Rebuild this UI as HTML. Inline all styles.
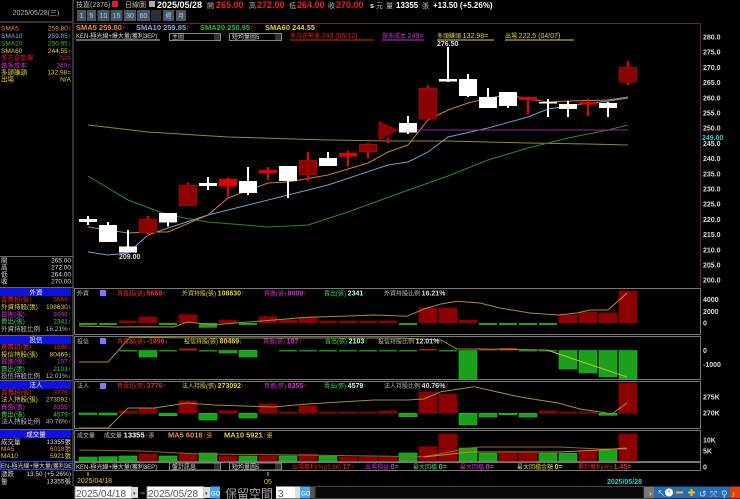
<!DOCTYPE html>
<html><head><meta charset="utf-8">
<style>
html,body{margin:0;padding:0;background:#000;}
body{width:740px;height:499px;overflow:hidden;position:relative;font-family:"Liberation Sans","Noto Sans CJK TC",sans-serif;}
svg{position:absolute;left:0;top:0;}
text{font-family:"Liberation Sans","Noto Sans CJK TC",sans-serif;}
</style></head><body>
<svg width="740" height="499" viewBox="0 0 740 499" xmlns="http://www.w3.org/2000/svg">
<rect width="740" height="499" fill="#000"/>

<!-- ===== LEFT PANEL ===== -->
<line x1="73" y1="0" x2="73" y2="486" stroke="#666" stroke-width="1"/>
<text x="36" y="15" font-size="7" fill="#bbb" text-anchor="middle">2025/05/28(三)</text>
<line x1="0" y1="22" x2="73" y2="22" stroke="#666"/>
<g font-size="6.5">
<text x="1" y="30.5" fill="#e8903a">SMA5</text><text x="71" y="30.5" fill="#e8903a" text-anchor="end">259.80↑</text>
<text x="1" y="38" fill="#7fb0e0">SMA10</text><text x="71" y="38" fill="#7fb0e0" text-anchor="end">259.85↑</text>
<text x="1" y="45.5" fill="#2fbf2f">SMA20</text><text x="71" y="45.5" fill="#2fbf2f" text-anchor="end">250.95↑</text>
<text x="1" y="53" fill="#e0d040">SMA60</text><text x="71" y="53" fill="#e0d040" text-anchor="end">244.55↑</text>
<text x="1" y="60" fill="#e02020">多方逆勢單</text><text x="71" y="60" fill="#e02020" text-anchor="end">N/A</text>
<text x="1" y="67.5" fill="#d030d0">做多成本</text><text x="71" y="67.5" fill="#d030d0" text-anchor="end">249=</text>
<text x="1" y="74.5" fill="#e0d040">多頭賺頭</text><text x="71" y="74.5" fill="#e0d040" text-anchor="end">132.98=</text>
<text x="1" y="81.5" fill="#e0d040">出場</text><text x="71" y="81.5" fill="#e0d040" text-anchor="end">N/A</text>
</g>
<line x1="0" y1="256.5" x2="73" y2="256.5" stroke="#666"/>
<g font-size="6.5" fill="#ddd">
<text x="1" y="262.5">開</text><text x="71" y="262.5" text-anchor="end">265.00</text>
<text x="1" y="269.5">高</text><text x="71" y="269.5" text-anchor="end">272.00</text>
<text x="1" y="276.5">低</text><text x="71" y="276.5" text-anchor="end">264.00</text>
<text x="1" y="283.5">收</text><text x="71" y="283.5" text-anchor="end">270.00</text>
</g>
<!-- 外資 -->
<line x1="0" y1="287.5" x2="73" y2="287.5" stroke="#666"/>
<rect x="0" y="288" width="71" height="8" fill="#1010e0"/>
<text x="36" y="294.5" font-size="6.5" fill="#fff" text-anchor="middle">外資</text>
<g font-size="6.5">
<text x="1" y="301.5" fill="#e03030">買賣超(張)</text><text x="71" y="301.5" fill="#e03030" text-anchor="end">5669↑</text>
<text x="1" y="309" fill="#e0d040">外資持股(張)</text><text x="71" y="309" fill="#e0d040" text-anchor="end">108630↑</text>
<text x="1" y="316.5" fill="#d030d0">買進(張)</text><text x="71" y="316.5" fill="#d030d0" text-anchor="end">8009↑</text>
<text x="1" y="323.5" fill="#40d060">賣出(張)</text><text x="71" y="323.5" fill="#40d060" text-anchor="end">2341↑</text>
<text x="1" y="331" fill="#bbb">外資持股比例</text><text x="71" y="331" fill="#bbb" text-anchor="end">16.21%↑</text>
</g>
<!-- 投信 -->
<line x1="0" y1="335.5" x2="73" y2="335.5" stroke="#666"/>
<rect x="0" y="336" width="71" height="8" fill="#1010e0"/>
<text x="36" y="342" font-size="6.5" fill="#fff" text-anchor="middle">投信</text>
<g font-size="6.5">
<text x="1" y="349" fill="#e03030">買賣超(張)</text><text x="71" y="349" fill="#e03030" text-anchor="end">-1996↓</text>
<text x="1" y="356.5" fill="#e0d040">投信持股(張)</text><text x="71" y="356.5" fill="#e0d040" text-anchor="end">80469↓</text>
<text x="1" y="363.5" fill="#d030d0">買進(張)</text><text x="71" y="363.5" fill="#d030d0" text-anchor="end">107↑</text>
<text x="1" y="371" fill="#40d060">賣出(張)</text><text x="71" y="371" fill="#40d060" text-anchor="end">2103↑</text>
<text x="1" y="378" fill="#bbb">投信持股比例</text><text x="71" y="378" fill="#bbb" text-anchor="end">12.01%↓</text>
</g>
<!-- 法人 -->
<line x1="0" y1="380.5" x2="73" y2="380.5" stroke="#666"/>
<rect x="0" y="381" width="71" height="8" fill="#1010e0"/>
<text x="36" y="387" font-size="6.5" fill="#fff" text-anchor="middle">法人</text>
<g font-size="6.5">
<text x="1" y="394.5" fill="#e03030">買賣超(張)</text><text x="71" y="394.5" fill="#e03030" text-anchor="end">3776↑</text>
<text x="1" y="401.5" fill="#e0d040">法人持股(張)</text><text x="71" y="401.5" fill="#e0d040" text-anchor="end">273092↑</text>
<text x="1" y="409" fill="#d030d0">買進(張)</text><text x="71" y="409" fill="#d030d0" text-anchor="end">8355↑</text>
<text x="1" y="416.5" fill="#40d060">賣出(張)</text><text x="71" y="416.5" fill="#40d060" text-anchor="end">4579↑</text>
<text x="1" y="423.5" fill="#bbb">法人持股比例</text><text x="71" y="423.5" fill="#bbb" text-anchor="end">40.76%↑</text>
</g>
<!-- 成交量 -->
<line x1="0" y1="429.5" x2="73" y2="429.5" stroke="#666"/>
<rect x="0" y="430" width="71" height="8" fill="#1010e0"/>
<text x="36" y="436.5" font-size="6.5" fill="#fff" text-anchor="middle">成交量</text>
<g font-size="6.5">
<text x="1" y="444" fill="#ddd">成交量</text><text x="71" y="444" fill="#ddd" text-anchor="end">13355張</text>
<text x="1" y="451" fill="#e8903a">MA5</text><text x="71" y="451" fill="#e8903a" text-anchor="end">6018張</text>
<text x="1" y="458" fill="#e0d040">MA10</text><text x="71" y="458" fill="#e0d040" text-anchor="end">5921張</text>
</g>
<rect x="0.5" y="461.5" width="72" height="8" fill="#000" stroke="#2040ff"/>
<text x="1" y="468" font-size="6" fill="#ddd">EN-極光線+爆大量(獲利3E</text>
<g font-size="6.5" fill="#ddd">
<text x="1" y="476">漲跌</text><text x="71" y="476" text-anchor="end">13.50 (+5.26%)</text>
<text x="1" y="483.5">量</text><text x="71" y="483.5" text-anchor="end">13355張</text>
</g>

<!-- ===== TOP BAR ===== -->
<g font-size="7">
<text x="76" y="7" fill="#bbb">技嘉(2376)</text>
<rect x="112" y="1" width="6" height="6" fill="#e02020"/>
<text x="125" y="7" fill="#bbb">日線圖</text>
<rect x="149" y="1" width="6" height="6" fill="#aaa"/>
</g>
<g font-weight="bold" font-size="9">
<text x="157" y="8" fill="#fff">2025/05/28</text>
<text x="207" y="8" fill="#bbb" font-size="7" font-weight="normal">開</text>
<text x="216" y="8" fill="#f02020">265.00</text>
<text x="249" y="8" fill="#bbb" font-size="7" font-weight="normal">高</text>
<text x="257" y="8" fill="#f02020">272.00</text>
<text x="289" y="8" fill="#bbb" font-size="7" font-weight="normal">低</text>
<text x="297" y="8" fill="#f02020">264.00</text>
<text x="328" y="8" fill="#bbb" font-size="7" font-weight="normal">收</text>
<text x="336" y="8" fill="#f02020">270.00</text>
<text x="370" y="8" fill="#fff" font-size="7">s</text>
<text x="376" y="8" fill="#bbb" font-size="7" font-weight="normal">元</text>
<text x="386" y="8" fill="#bbb" font-size="7" font-weight="normal">量</text>
<text x="396" y="8" fill="#fff" font-size="8">13355</text>
<text x="422" y="8" fill="#bbb" font-size="7" font-weight="normal">張</text>
<text x="433" y="8" fill="#fff" font-size="8">+13.50 (+5.26%)</text>
</g>
<!-- period buttons -->
<g font-size="7" fill="#9cd0ff" text-anchor="middle">
<rect x="77" y="10" width="9" height="11" fill="#4a5560"/><text x="81.5" y="18">1</text>
<rect x="87" y="10" width="9" height="11" fill="#4a5560"/><text x="91.5" y="18">5</text>
<rect x="97.5" y="10" width="12" height="11" fill="#4a5560"/><text x="103.5" y="18">10</text>
<rect x="110.5" y="10" width="12" height="11" fill="#4a5560"/><text x="116.5" y="18">15</text>
<rect x="124" y="10" width="12" height="11" fill="#4a5560"/><text x="130" y="18">30</text>
<rect x="137" y="10" width="13" height="11" fill="#4a5560"/><text x="143.5" y="18">60</text>
<rect x="151" y="10" width="10" height="11" fill="#2a3038"/>
<rect x="163" y="10" width="11" height="11" fill="#4a5560"/><text x="168.5" y="18" font-size="6">週</text>
<rect x="176" y="10" width="10" height="11" fill="#4a5560"/><text x="181" y="18" font-size="6">月</text>
</g>

<!-- ===== MAIN CHART ===== -->
<line x1="74" y1="23.5" x2="700" y2="23.5" stroke="#6a2040"/>
<line x1="700.5" y1="23" x2="700.5" y2="287" stroke="#6a2040"/>
<g font-size="7.5" font-weight="bold">
<text x="76" y="30" fill="#e8903a">SMA5 259.80<tspan fill="#f02020">↑</tspan></text>
<text x="136" y="30" fill="#7fb0e0">SMA10 259.85<tspan fill="#f02020">↑</tspan></text>
<text x="200" y="30" fill="#2fbf2f">SMA20 250.95<tspan fill="#f02020">↑</tspan></text>
<text x="265" y="30" fill="#e0d040">SMA60 244.55<tspan fill="#f02020">↑</tspan></text>
</g>
<g font-size="6">
<text x="76" y="38" fill="#ddd">KEN-極光線+爆大量(獲利3EP)</text>
<line x1="76" y1="40" x2="160" y2="40" stroke="#ccc"/>
<rect x="169.5" y="33.5" width="51" height="7" fill="#000" stroke="#888"/><text x="172" y="39" fill="#ddd">主圖</text><rect x="214" y="34" width="6" height="6" fill="#333"/>
<rect x="229.5" y="33.5" width="52" height="7" fill="#000" stroke="#888"/><text x="232" y="39" fill="#ddd">短均量圖5</text><rect x="275" y="34" width="6" height="6" fill="#333"/>
<text x="290" y="38" fill="#e02020">多方逆勢單 <tspan font-size="7">249   (05/12)</tspan></text>
<line x1="290" y1="40" x2="374" y2="40" stroke="#e02020"/>
<text x="382" y="38" fill="#d030d0">做多成本 <tspan font-size="7">249=</tspan></text>
<line x1="382" y1="40" x2="424" y2="40" stroke="#d030d0"/>
<text x="437" y="38" fill="#e0d040">多頭賺頭 <tspan font-size="7">132.98=</tspan></text>
<line x1="437" y1="40" x2="494" y2="40" stroke="#e0d040"/>
<text x="505" y="38" fill="#e0d040">出場 <tspan font-size="7">222.5   (04/07)</tspan></text>
<line x1="505" y1="40" x2="574" y2="40" stroke="#e0d040"/>
</g>

<!-- price axis -->
<g font-size="7" fill="#ddd" font-weight="bold">
<text x="703" y="39.5">280.0</text><text x="703" y="54.7">275.0</text><text x="703" y="69.9">270.0</text>
<text x="703" y="85.1">265.0</text><text x="703" y="100.3">260.0</text><text x="703" y="115.5">255.0</text>
<text x="703" y="130.7">250.0</text><text x="703" y="145.9">245.0</text><text x="703" y="161.1">240.0</text>
<text x="703" y="176.3">235.0</text><text x="703" y="191.5">230.0</text><text x="703" y="206.7">225.0</text>
<text x="703" y="221.9">220.0</text><text x="703" y="237.1">215.0</text><text x="703" y="252.3">210.0</text>
<text x="703" y="267.5">205.0</text><text x="703" y="282.7">200.0</text>
<rect x="702" y="133.5" width="30" height="7" fill="#000"/>
<text x="702" y="140" fill="#30d0d0">249.00</text>
</g>

<!-- MA lines -->
<g fill="none" stroke-width="1">
<polyline stroke="#8b8b2a" points="88,125 148,132 228,137 328,140 388,141 448,141 528,143 588,144 628,145"/>
<polyline stroke="#2a8a2a" points="88,176 128,200 168,215 208,222 268,227 308,225 348,212 400,193 448,176 488,160 528,148 568,138 608,130 628,125"/>
<polyline stroke="#6fa0c8" points="88,252 108,255 128,253 148,235 168,228 208,215 248,205 288,195 328,185 388,165 408,162 428,152 448,137 488,128 528,117 548,109 568,106 608,101 628,98"/>
<polyline stroke="#c8803a" points="88,227 128,233 148,232 168,232 208,215 228,198 268,183 288,182 328,175 368,163 388,152 408,145 428,120 448,110 468,103 488,98 508,95 528,99 548,102 568,101 608,100 628,97"/>
<line x1="395" y1="130" x2="628" y2="130" stroke="#a020a0"/>
</g>

<!-- candles -->
<g stroke-width="2">
<!-- whites -->
<g stroke="#fff" fill="#fff">
<line x1="88" y1="216" x2="88" y2="225"/><rect x="79" y="219" width="18" height="3" stroke="none"/>
<line x1="108" y1="222" x2="108" y2="242"/><rect x="99" y="225" width="18" height="17" stroke="none"/>
<line x1="128" y1="230" x2="128" y2="252"/><rect x="119" y="246.5" width="18" height="6" stroke="none"/>
<line x1="168" y1="213" x2="168" y2="226.5"/><rect x="159" y="213" width="18" height="9.5" stroke="none"/>
<line x1="208" y1="177" x2="208" y2="190"/><rect x="199" y="183" width="18" height="3" stroke="none"/>
<line x1="248" y1="167" x2="248" y2="195"/><rect x="239" y="181" width="18" height="12" stroke="none"/>
<line x1="288" y1="166" x2="288" y2="198"/><rect x="279" y="166" width="18" height="15" stroke="none"/>
<line x1="328" y1="152" x2="328" y2="166"/><rect x="319" y="158" width="18" height="8" stroke="none"/>
<line x1="408" y1="116" x2="408" y2="134"/><rect x="399" y="123" width="18" height="9.5" stroke="none"/>
<line x1="448" y1="47" x2="448" y2="82"/><rect x="439" y="79" width="18" height="2.5" stroke="none"/>
<line x1="468" y1="74" x2="468" y2="97"/><rect x="459" y="79" width="18" height="17" stroke="none"/>
<line x1="488" y1="88" x2="488" y2="108"/><rect x="479" y="97" width="18" height="11" stroke="none"/>
<line x1="508" y1="92" x2="508" y2="108"/><rect x="499" y="92" width="18" height="14" stroke="none"/>
<line x1="548" y1="99" x2="548" y2="117"/><rect x="539" y="102" width="18" height="1.5" stroke="none"/>
<line x1="568" y1="101" x2="568" y2="117"/><rect x="559" y="104" width="18" height="5" stroke="none"/>
<line x1="608" y1="102" x2="608" y2="117"/><rect x="599" y="103" width="18" height="5" stroke="none"/>
</g>
<!-- reds -->
<g stroke="#f00000">
<line x1="148" y1="216" x2="148" y2="236"/>
<line x1="188" y1="182.5" x2="188" y2="206"/>
<line x1="228" y1="177.5" x2="228" y2="196.5"/>
<line x1="268" y1="167" x2="268" y2="180"/>
<line x1="308" y1="152" x2="308" y2="181"/>
<line x1="348" y1="150.5" x2="348" y2="166.5"/>
<line x1="368" y1="143" x2="368" y2="158"/>
<line x1="388" y1="138" x2="388" y2="143"/>
<line x1="428" y1="85" x2="428" y2="119"/>
<line x1="528" y1="97" x2="528" y2="114"/>
<line x1="588" y1="99" x2="588" y2="116"/>
<line x1="628" y1="61" x2="628" y2="85"/>
</g>
<g fill="#8b0000" stroke="#b00000" stroke-width="1">
<rect x="139.5" y="219.5" width="17" height="13"/>
<rect x="179.5" y="185.5" width="17" height="20"/>
<rect x="299.5" y="160.5" width="17" height="14"/>
<rect x="359.5" y="144.5" width="17" height="7"/>
<rect x="419.5" y="88.5" width="17" height="30.5"/>
<rect x="619.5" y="67.5" width="17" height="14.5"/>
<polygon points="379,121.7 379,140 397,130"/>
</g>
<g fill="#e00000" stroke="none">
<rect x="219" y="179" width="18" height="7.5"/>
<rect x="259" y="170" width="18" height="3.3"/>
<rect x="339" y="153" width="18" height="3.7"/>
<rect x="519" y="97" width="18" height="3"/>
<rect x="579" y="102" width="18" height="2.5"/>
</g>
</g>
<text x="119" y="259" font-size="7" fill="#ddd" font-weight="bold">209.00</text>
<text x="437" y="46" font-size="7" fill="#ddd" font-weight="bold">276.50</text>

<!-- ===== SUB PANELS ===== -->
<g fill="none" stroke="#777">
<rect x="74.5" y="288.5" width="626" height="46"/>
<rect x="74.5" y="336.5" width="626" height="43"/>
<rect x="74.5" y="381.5" width="626" height="47"/>
<rect x="74.5" y="430.5" width="626" height="31"/>
<rect x="74.5" y="462.5" width="626" height="8"/>
</g>
<!-- panel 1 bars -->
<g>
<g fill="#1fa01f">
<rect x="79" y="323" width="18" height="2"/><rect x="99" y="323" width="18" height="2"/>
<rect x="159" y="323" width="18" height="2"/><rect x="199" y="323" width="18" height="4.7"/>
<rect x="239" y="323" width="18" height="2"/><rect x="399" y="323" width="18" height="2"/>
<rect x="479" y="323" width="18" height="2"/><rect x="499" y="323" width="18" height="2"/>
<rect x="519" y="323" width="18" height="2"/><rect x="539" y="323" width="18" height="2"/>
</g>
<g fill="#8b0000" stroke="#a00000" stroke-width="0.6">
<rect x="119" y="321" width="18" height="2"/><rect x="139" y="317" width="18" height="6"/>
<rect x="179" y="314.7" width="18" height="8.3"/><rect x="219" y="320" width="18" height="3"/>
<rect x="259" y="316.7" width="18" height="6.3"/><rect x="279" y="320" width="18" height="3"/>
<rect x="299" y="317.3" width="18" height="5.7"/><rect x="319" y="321" width="18" height="2"/>
<rect x="339" y="321" width="18" height="2"/><rect x="359" y="321" width="18" height="2"/>
<rect x="379" y="321" width="18" height="2"/><rect x="419" y="308" width="18" height="15"/>
<rect x="439" y="308" width="18" height="15"/><rect x="459" y="320" width="18" height="3"/>
<rect x="559" y="315" width="18" height="8"/><rect x="579" y="312" width="18" height="11"/>
<rect x="599" y="313" width="18" height="10"/><rect x="619" y="291" width="18" height="32"/>
</g>
<polyline fill="none" stroke="#a09030" points="79,326 117,327 154,326.7 174,327 187,322 214,324.7 274,320 307,317.3 341,316.3 374,315 407,316.3 424,309 441,304 457,301.3 480,303 500,308 530,313 558,315 577,313 590,310 608,310"/>
<polyline fill="none" stroke="#e08030" points="608,310 627,293"/>
</g>
<!-- panel 2 bars -->
<g>
<g fill="#1a8a1a">
<rect x="119" y="350" width="18" height="1.5"/><rect x="159" y="350" width="18" height="1.5"/>
<rect x="199" y="350" width="18" height="1.5"/><rect x="239" y="350" width="18" height="1.5"/>
<rect x="279" y="350" width="18" height="1.5"/><rect x="299" y="350" width="18" height="1.5"/>
<rect x="319" y="350" width="18" height="1.5"/><rect x="339" y="350" width="18" height="1.5"/>
<rect x="359" y="350" width="18" height="1.5"/><rect x="379" y="350" width="18" height="1.5"/>
<rect x="399" y="350" width="18" height="1.5"/><rect x="439" y="350" width="18" height="1.5"/>
<rect x="519" y="350" width="18" height="1.5"/><rect x="539" y="350" width="18" height="1.5"/>
</g>
<g fill="#1aa01a" stroke="#1fc01f" stroke-width="0.6">
<rect x="139" y="350.5" width="18" height="6.5"/><rect x="219" y="350.5" width="18" height="2.5"/>
<rect x="239" y="350.5" width="18" height="6.5"/><rect x="459" y="350.5" width="18" height="29"/>
<rect x="559" y="350.5" width="18" height="18.5"/><rect x="579" y="350.5" width="18" height="22.5"/>
<rect x="599" y="350.5" width="18" height="26.5"/><rect x="619" y="350.5" width="18" height="28.5"/>
</g>
<g fill="#b02000">
<rect x="179" y="348.5" width="18" height="2"/><rect x="419" y="349" width="18" height="1.5"/>
<rect x="479" y="349" width="18" height="1.5"/><rect x="499" y="348" width="18" height="2.5"/>
</g>
<polyline fill="none" stroke="#a09030" points="79,362 108,362 130,337.3 200,338 300,338 400,338 441,340 457,349 480,349 547,350"/>
<polyline fill="none" stroke="#c0c030" points="547,350 627,377"/>
</g>
<!-- panel 3 bars -->
<g>
<g fill="#1aa01a" stroke="#1fc01f" stroke-width="0.6">
<rect x="79" y="413" width="18" height="1.5"/><rect x="99" y="413" width="18" height="2"/>
<rect x="159" y="413.3" width="18" height="2.4"/><rect x="199" y="413.3" width="18" height="6.7"/>
<rect x="239" y="413.3" width="18" height="4.7"/><rect x="399" y="413.3" width="18" height="3.4"/>
<rect x="459" y="413.3" width="18" height="11.7"/><rect x="479" y="413.3" width="18" height="3.7"/>
<rect x="499" y="413.3" width="18" height="1.5"/><rect x="519" y="413.3" width="18" height="3.7"/>
<rect x="599" y="413.3" width="18" height="2"/>
</g>
<g fill="#8b0000" stroke="#a00000" stroke-width="0.6">
<rect x="119" y="411" width="18" height="2.3"/><rect x="139" y="408" width="18" height="5.3"/>
<rect x="179" y="401" width="18" height="12.3"/><rect x="219" y="410.7" width="18" height="2.6"/>
<rect x="259" y="404" width="18" height="9.3"/><rect x="279" y="412" width="18" height="1.3"/>
<rect x="299" y="406" width="18" height="7.3"/><rect x="319" y="412" width="18" height="1.3"/>
<rect x="339" y="412" width="18" height="1.3"/><rect x="359" y="412" width="18" height="1.3"/>
<rect x="379" y="411" width="18" height="2.3"/><rect x="419" y="392" width="18" height="21.3"/>
<rect x="439" y="394" width="18" height="19.3"/><rect x="539" y="411" width="18" height="2.3"/>
<rect x="559" y="412" width="18" height="1.3"/><rect x="579" y="412" width="18" height="1.3"/>
<rect x="619" y="383" width="18" height="30.3"/>
</g>
<polyline fill="none" stroke="#a09030" points="79,428 108,428 128,408 154,408 187,403 214,405 274,407 307,404 374,400 407,400 424,399 441,391.7 474,386.7 484,389 520,397 558,403 580,409 600,412 612,414"/>
<polyline fill="none" stroke="#e08030" points="612,414 627,403"/>
</g>
<!-- panel 4 volume -->
<g>
<g fill="#1aa01a" stroke="#1fc01f" stroke-width="0.6">
<rect x="79" y="457" width="18" height="4"/><rect x="99" y="456.7" width="18" height="4.3"/>
<rect x="119" y="456" width="18" height="5"/><rect x="159" y="456" width="18" height="5"/>
<rect x="199" y="453" width="18" height="8"/><rect x="239" y="456" width="18" height="5"/>
<rect x="279" y="456" width="18" height="5"/><rect x="319" y="456" width="18" height="5"/>
<rect x="399" y="453" width="18" height="8"/><rect x="459" y="448" width="18" height="13"/>
<rect x="479" y="453.3" width="18" height="7.7"/><rect x="539" y="453.3" width="18" height="7.7"/>
<rect x="559" y="453.3" width="18" height="7.7"/><rect x="599" y="450" width="18" height="11"/>
</g>
<g fill="#8b0000" stroke="#a00000" stroke-width="0.6">
<rect x="139" y="454" width="18" height="7"/><rect x="179" y="454" width="18" height="7"/>
<rect x="219" y="456" width="18" height="5"/><rect x="259" y="456" width="18" height="5"/>
<rect x="299" y="454" width="18" height="7"/><rect x="339" y="457" width="18" height="4"/>
<rect x="359" y="457" width="18" height="4"/><rect x="379" y="457" width="18" height="4"/>
<rect x="419" y="446.7" width="18" height="14.3"/><rect x="439" y="434" width="18" height="27"/>
<rect x="499" y="453.3" width="18" height="7.7"/><rect x="519" y="453.3" width="18" height="7.7"/>
<rect x="579" y="450.7" width="18" height="10.3"/><rect x="619" y="434" width="18" height="27"/>
</g>
<polyline fill="none" stroke="#8b6a20" points="79,450 140,451 200,454 300,455 424,456.7 470,448 480,447 560,447 600,449 627,449"/>
<polyline fill="none" stroke="#e08030" points="424,457 470,452 520,452 558,452 600,450 627,448"/>
</g>

<!-- sub panel legends -->
<g font-size="6">
<text x="77" y="295.5" fill="#bbb">外資</text>
<rect x="100" y="290" width="6" height="6" fill="#9a6aff"/>
<text x="117" y="295.5" fill="#e03030">買賣超(張) <tspan font-size="7" font-weight="bold">5669↑</tspan></text>
<text x="182" y="295.5" fill="#e0d040">外資持股(張) <tspan font-size="7" font-weight="bold">108630<tspan fill="#f02020">↑</tspan></tspan></text>
<text x="264" y="295.5" fill="#d030d0">買進(張) <tspan font-size="7" font-weight="bold">8009<tspan fill="#f02020">↑</tspan></tspan></text>
<text x="324" y="295.5" fill="#40d060">賣出(張) <tspan font-size="7" font-weight="bold" fill="#bfe">2341<tspan fill="#f02020">↑</tspan></tspan></text>
<text x="384" y="295.5" fill="#bbb">外資持股比例 <tspan font-size="7" font-weight="bold" fill="#ddd">16.21%<tspan fill="#f02020">↑</tspan></tspan></text>

<text x="77" y="343.5" fill="#bbb">投信</text>
<rect x="100" y="338" width="6" height="6" fill="#9a6aff"/>
<text x="117" y="343.5" fill="#e03030">買賣超(張) <tspan font-size="7" font-weight="bold">-1996<tspan fill="#30e030">↓</tspan></tspan></text>
<text x="184" y="343.5" fill="#e0d040">投信持股(張) <tspan font-size="7" font-weight="bold">80469<tspan fill="#30e030">↓</tspan></tspan></text>
<text x="263" y="343.5" fill="#d030d0">買進(張) <tspan font-size="7" font-weight="bold">107<tspan fill="#f02020">↑</tspan></tspan></text>
<text x="325" y="343.5" fill="#40d060">賣出(張) <tspan font-size="7" font-weight="bold" fill="#bfe">2103<tspan fill="#f02020">↑</tspan></tspan></text>
<text x="378" y="343.5" fill="#bbb">投信持股比例 <tspan font-size="7" font-weight="bold" fill="#ddd">12.01%<tspan fill="#30e030">↓</tspan></tspan></text>

<text x="77" y="388" fill="#bbb">法人</text>
<rect x="100" y="383" width="6" height="6" fill="#9a6aff"/>
<text x="117" y="388" fill="#e03030">買賣超(張) <tspan font-size="7" font-weight="bold">3776↑</tspan></text>
<text x="182" y="388" fill="#e0d040">法人持股(張) <tspan font-size="7" font-weight="bold">273092<tspan fill="#f02020">↑</tspan></tspan></text>
<text x="264" y="388" fill="#d030d0">買進(張) <tspan font-size="7" font-weight="bold">8355<tspan fill="#f02020">↑</tspan></tspan></text>
<text x="324" y="388" fill="#40d060">賣出(張) <tspan font-size="7" font-weight="bold" fill="#bfe">4579<tspan fill="#f02020">↑</tspan></tspan></text>
<text x="384" y="388" fill="#bbb">法人持股比例 <tspan font-size="7" font-weight="bold" fill="#ddd">40.76%<tspan fill="#f02020">↑</tspan></tspan></text>

<text x="77" y="437.5" fill="#bbb">成交量</text>
<text x="104" y="437.5" fill="#bbb">成交量 <tspan font-size="7.5" font-weight="bold" fill="#fff">13355<tspan fill="#f02020">↑</tspan></tspan>張</text>
<text x="168" y="437.5" fill="#e8903a" font-size="7.5" font-weight="bold">MA5 6018<tspan fill="#f02020">↑</tspan><tspan font-size="6" font-weight="normal">張</tspan></text>
<text x="224" y="437.5" fill="#e0d040" font-size="7.5" font-weight="bold">MA10 5921<tspan fill="#f02020">↑</tspan><tspan font-size="6" font-weight="normal">張</tspan></text>
</g>

<!-- sub axis labels -->
<g font-size="7" fill="#ddd" font-weight="bold">
<text x="703" y="302">4000</text><text x="703" y="314">2000</text><text x="703" y="325.5">0</text>
<text x="703" y="353">0</text><text x="703" y="367">-1000</text>
<text x="703" y="399.5">275K</text><text x="703" y="415.5">270K</text>
<text x="703" y="442.5">10K</text><text x="703" y="453.5">5K</text><text x="703" y="469.5">0</text>
</g>

<!-- bottom indicator row -->
<g font-size="6">
<text x="76" y="469" fill="#ddd">KEN-極光線+爆大量(獲利3EP)</text>
<rect x="169.5" y="463" width="51" height="7" fill="#000" stroke="#888"/><text x="172" y="469" fill="#ddd">盤計訊息</text><rect x="214" y="463.5" width="6" height="6" fill="#333"/>
<rect x="229.5" y="463" width="52" height="7" fill="#000" stroke="#888"/><text x="232" y="469" fill="#ddd">短均量圖5</text><rect x="275" y="463.5" width="6" height="6" fill="#333"/>
<text x="292" y="469" fill="#e02020">出場獲利(%)(5.88) <tspan font-size="7" font-weight="bold">17↑</tspan></text>
<text x="365" y="469" fill="#d030d0">出場損益 <tspan font-size="7" font-weight="bold">0=</tspan></text>
<text x="413" y="469" fill="#40d060">最大回檔 <tspan font-size="7" font-weight="bold">0=</tspan></text>
<text x="460" y="469" fill="#d030d0">最大回檔 <tspan font-size="7" font-weight="bold">0=</tspan></text>
<text x="517" y="469" fill="#e0d040">最大回檔金額 <tspan font-size="7" font-weight="bold">0=</tspan></text>
<text x="578" y="469" fill="#e03030">累計獲利(元) <tspan font-size="7" font-weight="bold">1.45=</tspan></text>
</g>

<!-- date axis -->
<line x1="88" y1="472" x2="88" y2="476" stroke="#e0d040"/>
<text x="77" y="483" font-size="7" fill="#e0d040">2025/04/18</text>
<line x1="268" y1="472" x2="268" y2="476" stroke="#e0d040"/>
<text x="264" y="484" font-size="7" fill="#e0d040">05</text>
<text x="607" y="484" font-size="7" fill="#30d0d0" font-weight="bold">2025/05/28</text>

<!-- bottom controls -->
<rect x="0" y="486" width="740" height="13" fill="#000"/>
<rect x="75" y="486.5" width="57" height="12" fill="#fff" stroke="#888"/>
<text x="76" y="497" font-size="10" fill="#555">2025/04/18</text>
<rect x="132" y="487" width="6" height="11" fill="#ddd"/><text x="133" y="495" font-size="5" fill="#333">▾</text>
<text x="140" y="496" font-size="9" fill="#ccc">~</text>
<rect x="147" y="486.5" width="57" height="12" fill="#fff" stroke="#888"/>
<text x="148" y="497" font-size="10" fill="#555">2025/05/28</text>
<rect x="204" y="487" width="6" height="11" fill="#ddd"/><text x="205" y="495" font-size="5" fill="#333">▾</text>
<rect x="210" y="486.5" width="10" height="12" fill="#4aa8e8"/><text x="211" y="495.5" font-size="6" fill="#fff">GO</text>
<text x="225" y="498" font-size="12" fill="#aaa">保留空間</text>
<rect x="276" y="486.5" width="24" height="12" fill="#fff"/>
<text x="278" y="497" font-size="10" fill="#555">3</text>
<rect x="295" y="487" width="5" height="11" fill="#ddd"/>
<rect x="300" y="486.5" width="10" height="12" fill="#4aa8e8"/><text x="301" y="495.5" font-size="6" fill="#fff">GO</text>
<rect x="310" y="486.5" width="5" height="12" fill="#555"/>
<rect x="315" y="486.5" width="329" height="12" fill="#0a0a0a" stroke="#444"/>
<rect x="644" y="486.5" width="10" height="12" fill="#777"/><text x="649" y="496" font-size="8" fill="#fff">›</text>
<rect x="654" y="486.5" width="86" height="12" fill="#2a6ab0"/>
<g font-size="9" fill="#fff">
<text x="657" y="497" fill="#bfe0ff">↖</text>
<circle cx="669" cy="492.5" r="4" fill="#fff"/><line x1="669" y1="490" x2="669" y2="493" stroke="#e08020"/>
<rect x="676" y="491.5" width="7" height="2" fill="#f0c020"/>
<rect x="688" y="491.5" width="7" height="2" fill="#f0c020"/><rect x="690.5" y="489" width="2" height="7" fill="#f0c020"/>
<text x="699" y="497" fill="#bfe0ff">↺</text>
<text x="710" y="497" fill="#bfe0ff">⤧</text>
<text x="721" y="497" fill="#bfe0ff">⚲</text>
<rect x="730" y="486.5" width="10" height="12" fill="#e04010"/>
<text x="731" y="497" fill="#f8d040">♪</text>
</g>
</svg>
</body></html>
